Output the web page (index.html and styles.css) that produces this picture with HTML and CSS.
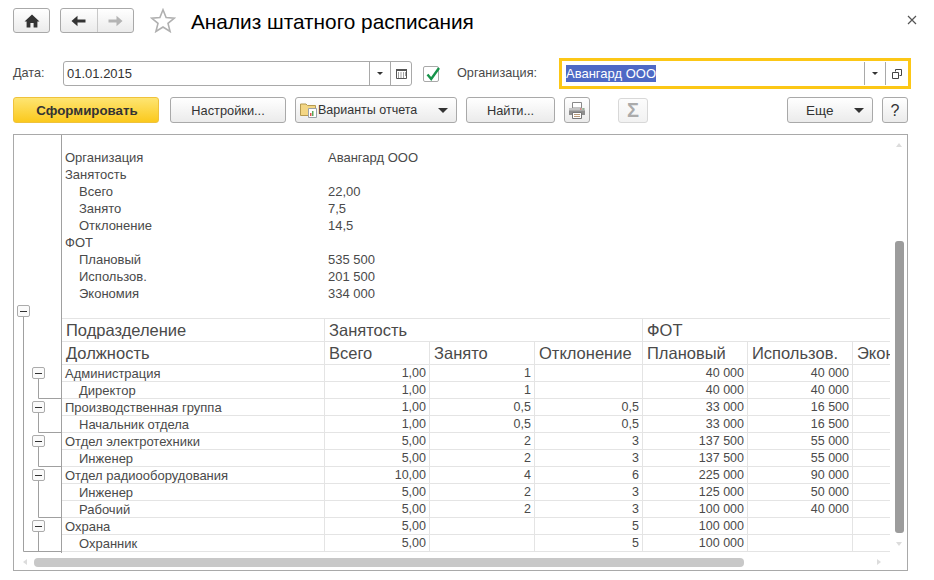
FILE: index.html
```html
<!DOCTYPE html>
<html lang="ru">
<head>
<meta charset="utf-8">
<title>Анализ штатного расписания</title>
<link rel="stylesheet" href="styles.css">
</head>
<body>
<header class="head">
  <button class="btn btn-home" aria-label="Домой">
    <svg width="16" height="14" viewBox="0 0 16 14"><path d="M8 0.5 L15.5 7.5 L13.4 7.5 L13.4 13.5 L9.6 13.5 L9.6 9 L6.4 9 L6.4 13.5 L2.6 13.5 L2.6 7.5 L0.5 7.5 Z" fill="#333"/></svg>
  </button>
  <div class="btn nav-group">
    <span class="nav-cell nav-back">
      <svg width="15" height="12" viewBox="0 0 15 12"><path d="M0.5 6 L6.5 0.8 L6.5 4.5 L14.5 4.5 L14.5 7.5 L6.5 7.5 L6.5 11.2 Z" fill="#333"/></svg>
    </span>
    <span class="nav-cell">
      <svg width="15" height="12" viewBox="0 0 15 12"><path d="M14.5 6 L8.5 0.8 L8.5 4.5 L0.5 4.5 L0.5 7.5 L8.5 7.5 L8.5 11.2 Z" fill="#b4b4b4"/></svg>
    </span>
  </div>
  <svg class="star" width="26" height="25" viewBox="0 0 26 25"><path d="M13 1.8 L16.1 9.6 L24.4 10.1 L18 15.4 L20.1 23.5 L13 19 L5.9 23.5 L8 15.4 L1.6 10.1 L9.9 9.6 Z" fill="#fff" stroke="#b0b0b0" stroke-width="1.6"/></svg>
  <h1 class="title">Анализ штатного расписания</h1>
  <svg class="close" width="10" height="10" viewBox="0 0 10 10"><path d="M1 1 L9 9 M9 1 L1 9" stroke="#555" stroke-width="1.2" fill="none"/></svg>
</header>

<section class="form-row">
  <label class="form-label">Дата:</label>
  <div class="field date-field">
    <span class="field-value">01.01.2015</span>
    <span class="field-cell"><i class="tri tri-small"></i></span>
    <span class="field-cell">
      <svg width="11" height="10" viewBox="0 0 11 10"><path d="M0.5 0.5 H10.5 V9.5 H0.5 Z" fill="#fff" stroke="#555"/><path d="M0 0 H11 V2 H0 Z" fill="#555"/><path d="M2 4 H3 M4.500 4 H5.500 M7 4 H8 M9 4 H10 M2 6 H3 M4.500 6 H5.500 M7 6 H8 M9 6 H10 M2 8 H3 M4.500 8 H5.500 M7 8 H8" stroke="#444" stroke-width="1" fill="none"/></svg>
    </span>
  </div>
  <span class="checkbox">
    <svg width="17" height="17" viewBox="0 0 17 17"><path d="M3.5 7.500 L7.200 12 L15 1" fill="none" stroke="#17934a" stroke-width="2.400"/></svg>
  </span>
  <label class="form-label org-label">Организация:</label>
  <div class="field org-field">
    <span class="field-value"><span class="selected">Авангард ООО</span></span>
    <span class="field-cell org-cell"><i class="tri tri-small"></i></span>
    <span class="field-cell org-cell org-open">
      <svg width="10" height="10" viewBox="0 0 10 10"><path d="M3.500 2.500 V0.500 H9.500 V6.500 H7.500 M0.500 3.500 H6.500 V9.500 H0.500 Z" fill="none" stroke="#444"/></svg>
    </span>
  </div>
</section>

<nav class="toolbar">
  <button class="btn btn-primary">Сформировать</button>
  <button class="btn btn-settings">Настройки...</button>
  <button class="btn btn-variants">
    <svg class="folder" width="18" height="16" viewBox="0 0 18 16"><path d="M0.500 2 H6 L7.500 3.500 H15.500 V13.500 H0.500 Z" fill="#f3d684" stroke="#b59a50"/><path d="M8.500 6.500 H16.500 V15.500 H8.500 Z" fill="#fff" stroke="#9aa0a8"/><path d="M10 14 V11 H11.500 V14 Z" fill="#d9534f"/><path d="M12 14 V9 H13.500 V14 Z" fill="#5aa85a"/></svg>
    <span class="variants-text">Варианты отчета</span>
    <i class="tri"></i>
  </button>
  <button class="btn btn-find">Найти...</button>
  <button class="btn btn-print" aria-label="Печать">
    <svg width="18" height="17" viewBox="0 0 18 17"><path d="M4.500 0.500 H13.500 V6 H4.500 Z" fill="#fff" stroke="#888"/><path d="M1 6 H17 V13 H1 Z" fill="#8f8f8f"/><path d="M1 6 H17 V8.500 H1 Z" fill="#c4c4c4"/><path d="M4.500 10.500 H13.500 V16.500 H4.500 Z" fill="#fff" stroke="#777"/><path d="M6 12.500 H12 M6 14.500 H12" stroke="#b89a7a"/><path d="M12 7 H13.500" stroke="#d9534f"/><path d="M14.500 7 H16" stroke="#5aa85a"/></svg>
  </button>
  <button class="btn btn-sigma">Σ</button>
  <button class="btn btn-more"><span>Еще</span><i class="tri"></i></button>
  <button class="btn btn-help">?</button>
</nav>

<main class="panel">
  <svg class="tree" width="47" height="435" viewBox="14 135 47 435">
    <path class="tree-line" d="M23.500 317 V551.500 H61 M38.500 379 V398.500 H61 M38.500 413 V432.500 H61 M38.500 447 V466.500 H61 M38.500 481 V517.500 H61 M38.500 532 V551.500"/>
    <g class="tree-box">
      <rect x="17.500" y="305.500" width="12" height="11" rx="1.500"/><path d="M20 311 H27"/>
      <rect x="32.500" y="367.500" width="12" height="11" rx="1.500"/><path d="M35 373 H42"/>
      <rect x="32.500" y="401.500" width="12" height="11" rx="1.500"/><path d="M35 407 H42"/>
      <rect x="32.500" y="435.500" width="12" height="11" rx="1.500"/><path d="M35 441 H42"/>
      <rect x="32.500" y="469.500" width="12" height="11" rx="1.500"/><path d="M35 475 H42"/>
      <rect x="32.500" y="520.500" width="12" height="11" rx="1.500"/><path d="M35 526 H42"/>
    </g>
  </svg>
  <div class="report">
    <dl class="info">
      <dt>Организация</dt><dd>Авангард ООО</dd>
      <dt>Занятость</dt><dd></dd>
      <dt class="indent">Всего</dt><dd>22,00</dd>
      <dt class="indent">Занято</dt><dd>7,5</dd>
      <dt class="indent">Отклонение</dt><dd>14,5</dd>
      <dt>ФОТ</dt><dd></dd>
      <dt class="indent">Плановый</dt><dd>535 500</dd>
      <dt class="indent">Использов.</dt><dd>201 500</dd>
      <dt class="indent">Экономия</dt><dd>334 000</dd>
    </dl>
    <table class="grid">
      <colgroup>
        <col class="c-name"><col class="c-num"><col class="c-num"><col class="c-wide"><col class="c-num"><col class="c-num"><col class="c-num">
      </colgroup>
      <thead>
        <tr><th>Подразделение</th><th colspan="3">Занятость</th><th colspan="3">ФОТ</th></tr>
        <tr><th>Должность</th><th>Всего</th><th>Занято</th><th>Отклонение</th><th>Плановый</th><th>Использов.</th><th>Экономия</th></tr>
      </thead>
      <tbody>
        <tr><td>Администрация</td><td>1,00</td><td>1</td><td></td><td>40 000</td><td>40 000</td><td></td></tr>
        <tr><td class="sub">Директор</td><td>1,00</td><td>1</td><td></td><td>40 000</td><td>40 000</td><td></td></tr>
        <tr><td>Производственная группа</td><td>1,00</td><td>0,5</td><td>0,5</td><td>33 000</td><td>16 500</td><td></td></tr>
        <tr><td class="sub">Начальник отдела</td><td>1,00</td><td>0,5</td><td>0,5</td><td>33 000</td><td>16 500</td><td></td></tr>
        <tr><td>Отдел электротехники</td><td>5,00</td><td>2</td><td>3</td><td>137 500</td><td>55 000</td><td></td></tr>
        <tr><td class="sub">Инженер</td><td>5,00</td><td>2</td><td>3</td><td>137 500</td><td>55 000</td><td></td></tr>
        <tr><td>Отдел радиооборудования</td><td>10,00</td><td>4</td><td>6</td><td>225 000</td><td>90 000</td><td></td></tr>
        <tr><td class="sub">Инженер</td><td>5,00</td><td>2</td><td>3</td><td>125 000</td><td>50 000</td><td></td></tr>
        <tr><td class="sub">Рабочий</td><td>5,00</td><td>2</td><td>3</td><td>100 000</td><td>40 000</td><td></td></tr>
        <tr><td>Охрана</td><td>5,00</td><td></td><td>5</td><td>100 000</td><td></td><td></td></tr>
        <tr><td class="sub">Охранник</td><td>5,00</td><td></td><td>5</td><td>100 000</td><td></td><td></td></tr>
      </tbody>
    </table>
  </div>
  <i class="arrow arrow-up"></i>
  <i class="thumb thumb-v"></i>
  <i class="arrow arrow-down"></i>
  <i class="arrow arrow-left"></i>
  <i class="thumb thumb-h"></i>
  <i class="arrow arrow-right"></i>
</main>
</body>
</html>
```

FILE: styles.css
```css
* { box-sizing: border-box; }
html, body { margin: 0; padding: 0; }
body {
  width: 934px;
  height: 580px;
  overflow: hidden;
  background: #fff;
  color: #4a4a4a;
  font: 13px/17px "Liberation Sans", Arial, sans-serif;
}

.btn {
  display: flex;
  align-items: center;
  justify-content: center;
  height: 26px;
  margin: 0;
  padding: 0;
  border: 1px solid #a9a9a9;
  border-radius: 3px;
  background: linear-gradient(#ffffff, #ebebeb);
  color: #333;
  font: 12.800px/17px "Liberation Sans", Arial, sans-serif;
}

/* Header */
.head {
  display: flex;
  align-items: flex-start;
  height: 33px;
  padding: 8px 0 0 13px;
}
.head .btn { height: 25px; }
.btn-home { width: 37px; }
.nav-group { width: 74px; margin-left: 10px; }
.nav-cell {
  flex: 1;
  height: 100%;
  display: flex;
  align-items: center;
  justify-content: center;
}
.nav-back { border-right: 1px solid #c8c8c8; }
.star { margin: 0 0 0 16px; display: block; }
.title {
  margin: 0 0 0 15px;
  color: #000;
  font: 400 20.800px/28px "Liberation Sans", Arial, sans-serif;
}
.close { margin: 7px 17px 0 auto; display: block; }

/* Form row */
.form-row {
  display: flex;
  align-items: center;
  height: 31px;
  margin-top: 25px;
  padding-left: 13px;
}
.form-label { width: 50px; font-size: 12.700px; }
.org-label { width: 102px; margin-left: 18px; }
.field {
  display: flex;
  align-items: stretch;
  background: #fff;
}
.date-field {
  width: 349px;
  height: 25px;
  border: 1px solid #a9a9a9;
  border-radius: 3px;
}
.field-value {
  flex: 1;
  padding-left: 3px;
  align-self: center;
  color: #333;
  white-space: nowrap;
}
.field-cell {
  width: 21px;
  display: flex;
  align-items: center;
  justify-content: center;
  border-left: 1px solid #a9a9a9;
}
.checkbox {
  width: 16px;
  height: 16px;
  margin-left: 11px;
  border: 1px solid #a9a9a9;
  border-radius: 2px;
  display: block;
  line-height: 0;
}
.org-field {
  width: 352px;
  height: 31px;
  border: 3px solid #fcc716;
  padding: 1px 0;
}
.org-field .field-value { padding-left: 4px; }
.selected {
  display: inline-block;
  background: #4e69c5;
  color: #fff;
  line-height: 17px;
}
.org-cell { width: 21px; }
.org-open { width: 23px; }

.tri {
  display: block;
  width: 0;
  height: 0;
  border-left: 5px solid transparent;
  border-right: 5px solid transparent;
  border-top: 5px solid #333;
}
.tri-small {
  border-left-width: 3px;
  border-right-width: 3px;
  border-top-width: 3px;
}

/* Toolbar */
.toolbar {
  display: flex;
  align-items: flex-start;
  height: 26px;
  margin-top: 8px;
  padding-left: 13px;
}
.btn-primary {
  width: 146px;
  padding-left: 2px;
  background: linear-gradient(#fee572, #fbc91d);
  border-color: #efc23c;
  font-size: 13.300px;
  font-weight: 700;
}
.btn-settings { width: 116px; margin-left: 11px; }
.btn-variants {
  width: 162px;
  margin-left: 9px;
  justify-content: flex-start;
  padding-left: 4px;
  font-size: 12.500px;
}
.folder { display: block; }
.variants-text { flex: 1; text-align: left; }
.btn-variants .tri { margin-right: 8px; }
.btn-find { width: 89px; margin-left: 9px; }
.btn-print { width: 26px; margin-left: 9px; }
.btn-sigma {
  width: 30px;
  height: 25px;
  margin: 1px 0 0 28px;
  border-color: #d8d8d8;
  background: linear-gradient(#fcfcfc, #f2f2f2);
  color: #ababab;
  font-size: 20px;
  font-weight: 700;
}
.btn-more { width: 86px; margin-left: auto; padding: 0 8px 0 18px; justify-content: space-between; font-size: 13.500px; }
.btn-help { width: 26px; margin: 0 26px 0 9px; font-size: 16px; }

/* Panel */
.panel {
  position: relative;
  display: flex;
  align-items: flex-start;
  width: 895px;
  height: 437px;
  margin: 11px 0 0 13px;
  border: 1px solid #a9a9a9;
}
.tree { display: block; flex: none; }
.tree-line { fill: none; stroke: #a0a0a0; stroke-width: 1; }
.tree-box rect { fill: #fafafa; stroke: #ababab; }
.tree-box path { stroke: #333; stroke-width: 1; shape-rendering: crispEdges; }

.report {
  width: 829px;
  height: 418px;
  flex: none;
  overflow: hidden;
  border-left: 1px solid #a0a0a0;
  padding-top: 14px;
}
.info {
  display: grid;
  grid-template-columns: 263px 1fr;
  grid-auto-rows: 17px;
  width: 100%;
  margin: 0 0 16px;
}
.info dt { padding-left: 3px; }
.info dt.indent { padding-left: 17px; }
.info dd { margin: 0; padding-left: 3px; }

.grid {
  table-layout: fixed;
  width: 896px;
  border-collapse: separate;
  border-spacing: 0;
  border-top: 1px solid #e4e4e4;
}
.c-name { width: 263px; }
.c-num { width: 105px; }
.c-wide { width: 108px; }
.grid th, .grid td {
  padding: 0;
  border-right: 1px solid #e4e4e4;
  border-bottom: 1px solid #e4e4e4;
  white-space: nowrap;
  overflow: hidden;
}
.grid th {
  height: 23px;
  padding-left: 4px;
  text-align: left;
  font: 400 16.500px/22px "Liberation Sans", Arial, sans-serif;
}
.grid td {
  height: 17px;
  padding-top: 1px;
  padding-right: 3px;
  text-align: right;
  font-size: 12.500px;
  line-height: 15px;
}
.grid td:first-child { padding: 1px 0 0 3px; text-align: left; font-size: 13px; }
.grid td.sub { padding-left: 17px; }

/* Scrollbars */
.thumb { position: absolute; display: block; }
.thumb-v {
  left: 881px;
  top: 106px;
  width: 9px;
  height: 292px;
  background: #9c9c9c;
  border-radius: 3px;
}
.thumb-h {
  left: 20px;
  top: 423px;
  width: 710px;
  height: 9px;
  background: #c8c8c8;
  border-radius: 4px;
}
.arrow { position: absolute; display: block; width: 0; height: 0; border: 0 solid transparent; }
.arrow-up {
  left: 882px; top: 8px;
  border-width: 0 3px 4px;
  border-bottom-color: #dcdcdc;
}
.arrow-down {
  left: 882px; top: 407px;
  border-width: 4px 3px 0;
  border-top-color: #dcdcdc;
}
.arrow-left {
  left: 9px; top: 424px;
  border-width: 3px 4px 3px 0;
  border-right-color: #dcdcdc;
}
.arrow-right {
  left: 863px; top: 424px;
  border-width: 3px 0 3px 4px;
  border-left-color: #dcdcdc;
}
```
